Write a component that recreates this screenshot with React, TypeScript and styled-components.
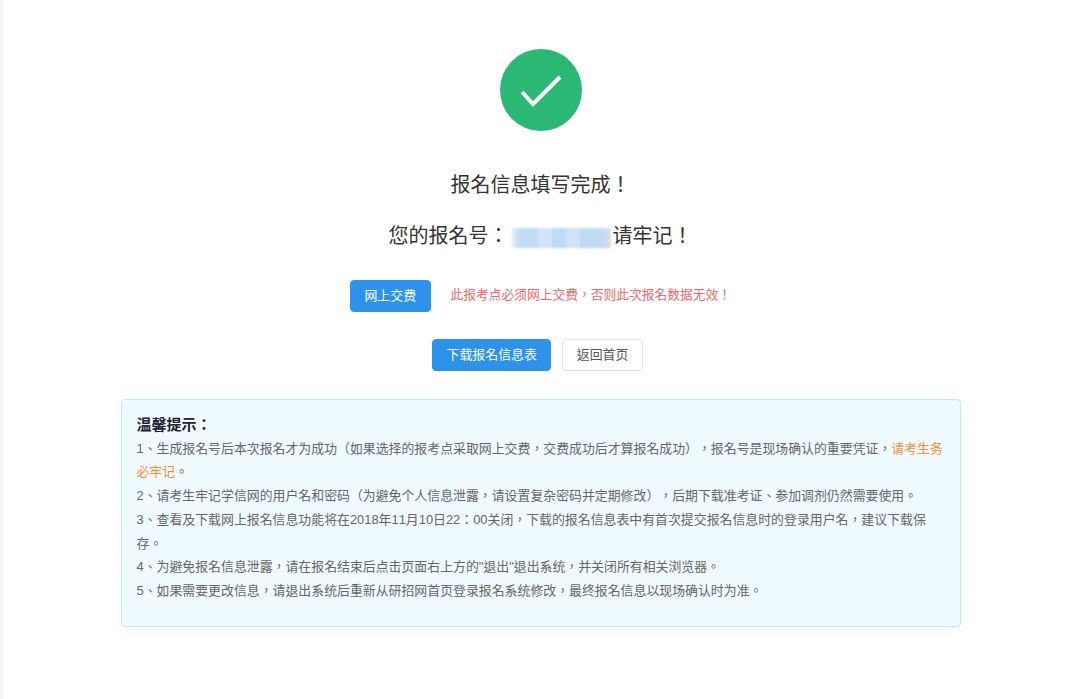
import React from 'react';
import styled, { createGlobalStyle } from 'styled-components';

const GlobalStyle = createGlobalStyle`
  html, body {
    margin: 0;
    padding: 0;
    background: #fff;
    font-family: "Liberation Sans", "Noto Sans CJK TC", "Noto Sans CJK SC", sans-serif;
    text-spacing-trim: space-all;
    font-kerning: none;
    font-feature-settings: "chws" 0, "kern" 0, "palt" 0, "halt" 0;
  }
`;

const Page = styled.div`
  box-sizing: border-box;
  min-height: 699px;
  padding: 49px 0 0;
  border-left: 3px solid #f5f5f5;
  display: flex;
  flex-direction: column;
  align-items: center;
`;

const SuccessIcon = styled.svg`
  display: block;
  width: 82px;
  height: 82px;
`;

const Heading = styled.h2<{ $top: number }>`
  margin: ${(p) => p.$top}px 0 0;
  display: flex;
  align-items: center;
  font-size: 20px;
  line-height: 30px;
  font-weight: 400;
  color: #333;
`;

const Redacted = styled.span`
  display: block;
  width: 99px;
  height: 20px;
  margin: 3px 2px 0 3px;
  filter: blur(1.2px);
  background: linear-gradient(
    90deg,
    #e6edf6 0,
    #c2dcf6 8%,
    #c2dcf6 26%,
    #d2e4f6 27%,
    #d2e4f6 40%,
    #c0dbf6 41%,
    #c0dbf6 54%,
    #d0e3f6 55%,
    #d0e3f6 68%,
    #c0dbf6 69%,
    #c0dbf6 92%,
    #dddfe2 100%
  );
`;

const ButtonRow = styled.div<{ $top: number; $gap: number; $right?: number }>`
  display: flex;
  align-items: center;
  margin-top: ${(p) => p.$top}px;
  padding-right: ${(p) => p.$right ?? 0}px;
  gap: ${(p) => p.$gap}px;
`;

const Button = styled.button<{ $plain?: boolean }>`
  box-sizing: border-box;
  height: 32px;
  padding: 0 13.5px;
  border: 1px solid ${(p) => (p.$plain ? '#dfe1e6' : '#2d93ea')};
  border-radius: 4px;
  background: ${(p) => (p.$plain ? '#fff' : '#2d93ea')};
  color: ${(p) => (p.$plain ? '#555' : '#fff')};
  font: inherit;
  font-size: 12.9px;
  line-height: 30px;
`;

const Warning = styled.span`
  margin-bottom: 5px;
  font-size: 12.75px;
  color: #f0696b;
`;

const Notice = styled.div`
  box-sizing: border-box;
  width: 840px;
  height: 228px;
  margin-top: 28px;
  padding: 13px 15px;
  border: 1px solid #bde8fd;
  border-radius: 4px;
  background: #f0fbff;
  box-shadow: 0 2px 12px rgba(0, 0, 0, 0.04);
  font-size: 12.9px;
  line-height: 23.7px;
  color: #666;
`;

const NoticeTitle = styled.div`
  font-size: 15px;
  font-weight: 700;
  color: #223;
`;

const NoticeLine = styled.p`
  margin: 0;
`;

const Highlight = styled.span`
  color: #fa8c35;
`;

export default function App() {
  return (
    <Page>
      <GlobalStyle />
      <SuccessIcon viewBox="0 0 82 82">
        <circle cx="41" cy="41" r="41" fill="#2bb875" />
        <path d="M22 43 L33 55 L60 28" fill="none" stroke="#fff" strokeWidth="4" />
      </SuccessIcon>
      <Heading $top={39}>报名信息填写完成！</Heading>
      <Heading $top={21}>
        您的报名号：
        <Redacted />
        请牢记！
      </Heading>
      <ButtonRow $top={29} $gap={20}>
        <Button>网上交费</Button>
        <Warning>此报考点必须网上交费，否则此次报名数据无效！</Warning>
      </ButtonRow>
      <ButtonRow $top={27} $right={6} $gap={11}>
        <Button>下载报名信息表</Button>
        <Button $plain>返回首页</Button>
      </ButtonRow>
      <Notice>
        <NoticeTitle>温馨提示：</NoticeTitle>
        <NoticeLine>
          1、生成报名号后本次报名才为成功（如果选择的报考点采取网上交费，交费成功后才算报名成功），报名号是现场确认的重要凭证，
          <Highlight>请考生务必牢记</Highlight>。
        </NoticeLine>
        <NoticeLine>
          2、请考生牢记学信网的用户名和密码（为避免个人信息泄露，请设置复杂密码并定期修改），后期下载准考证、参加调剂仍然需要使用。
        </NoticeLine>
        <NoticeLine>
          3、查看及下载网上报名信息功能将在2018年11月10日22：00关闭，下载的报名信息表中有首次提交报名信息时的登录用户名，建议下载保存。
        </NoticeLine>
        <NoticeLine>
          4、为避免报名信息泄露，请在报名结束后点击页面右上方的"退出"退出系统，并关闭所有相关浏览器。
        </NoticeLine>
        <NoticeLine>
          5、如果需要更改信息，请退出系统后重新从研招网首页登录报名系统修改，最终报名信息以现场确认时为准。
        </NoticeLine>
      </Notice>
    </Page>
  );
}
